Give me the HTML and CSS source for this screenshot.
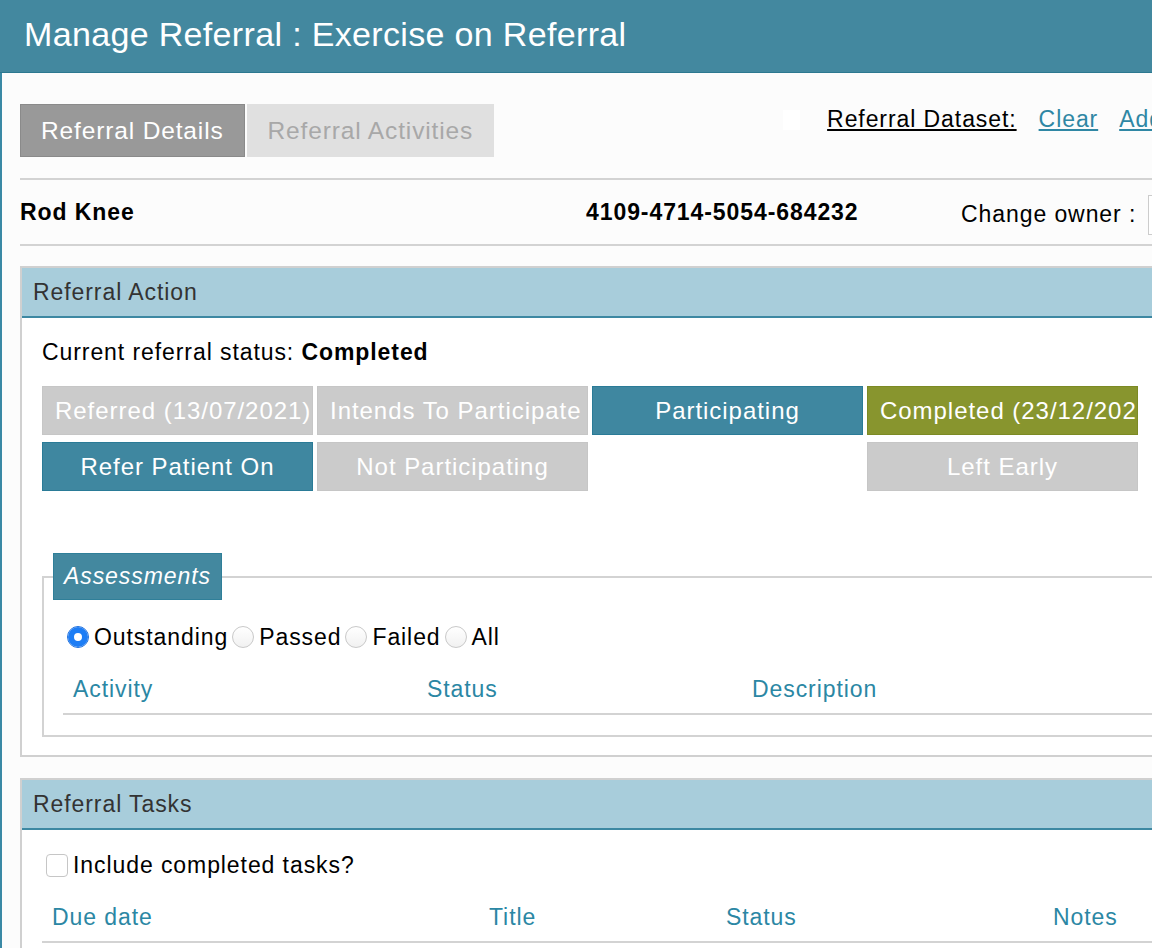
FILE: index.html
```html
<!DOCTYPE html>
<html lang="en">
<head>
    <meta charset="UTF-8">
    <title>Manage Referral : Exercise on Referral</title>
    <link rel="stylesheet" href="styles.css">
</head>
<body>
<div class="page">

    <header class="page-header">
        <h1>Manage Referral : Exercise on Referral</h1>
    </header>

    <div class="content">

        <!-- Tabs & dataset tools -->
        <div class="top-bar">
            <div class="tabs">
                <div class="tab tab-active">Referral Details</div>
                <div class="tab tab-inactive">Referral Activities</div>
            </div>
            <div class="dataset-tools">
                <span class="blank-box"></span>
                <span class="dataset-label">Referral Dataset:</span>
                <a href="#">Clear</a>
                <a href="#">Add</a>
            </div>
        </div>

        <hr class="rule">

        <div class="patient-row">
            <span class="patient-name">Rod Knee</span>
            <span class="patient-id">4109-4714-5054-684232</span>
            <span class="owner">Change owner : <span class="owner-box"></span></span>
        </div>

        <hr class="rule rule-tight">

        <!-- Referral Action -->
        <section class="panel">
            <div class="panel-title">Referral Action</div>
            <div class="panel-body">
                <div class="status-line">Current referral status: <b>Completed</b></div>

                <div class="status-grid">
                    <div class="status-btn btn-grey">Referred (13/07/2021)</div>
                    <div class="status-btn btn-grey">Intends To Participate</div>
                    <div class="status-btn btn-teal">Participating</div>
                    <div class="status-btn btn-olive">Completed (23/12/2021)</div>
                    <div class="status-btn btn-teal">Refer Patient On</div>
                    <div class="status-btn btn-grey">Not Participating</div>
                    <div></div>
                    <div class="status-btn btn-grey">Left Early</div>
                </div>

                <fieldset class="assessments">
                    <legend>Assessments</legend>
                    <div class="radio-row">
                        <label><input type="radio" name="filter" checked>Outstanding</label>
                        <label><input type="radio" name="filter">Passed</label>
                        <label><input type="radio" name="filter">Failed</label>
                        <label><input type="radio" name="filter">All</label>
                    </div>
                    <table class="grid-table assess-table">
                        <thead>
                            <tr>
                                <th class="col-activity">Activity</th>
                                <th class="col-status">Status</th>
                                <th>Description</th>
                            </tr>
                        </thead>
                    </table>
                </fieldset>
            </div>
        </section>

        <!-- Referral Tasks -->
        <section class="panel panel-tasks">
            <div class="panel-title">Referral Tasks</div>
            <div class="panel-body">
                <label class="check-row"><input type="checkbox">Include completed tasks?</label>
                <table class="grid-table tasks-table">
                    <thead>
                        <tr>
                            <th class="col-due">Due date</th>
                            <th class="col-title">Title</th>
                            <th class="col-tstatus">Status</th>
                            <th>Notes</th>
                        </tr>
                    </thead>
                </table>
            </div>
        </section>

    </div>
</div>
</body>
</html>
```

FILE: styles.css
```css
* {
    box-sizing: border-box;
}

html, body {
    margin: 0;
    padding: 0;
    overflow: hidden;
}

body {
    font-family: "Liberation Sans", Arial, sans-serif;
    font-size: 23px;
    letter-spacing: 0.04em;
    color: #000;
    background: #fcfcfc;
}

.page {
    width: 1400px;
}

.page-header {
    background: #43889f;
    height: 73px;
    border-bottom: 1px solid #2c7890;
    padding-left: 24px;
}

.page-header h1 {
    margin: 0;
    font-size: 34px;
    font-weight: normal;
    letter-spacing: 0.01em;
    line-height: 68px;
    color: #fff;
}

.content {
    border-left: 2px solid #3a89a5;
    padding: 31px 0 0 18px;
    min-height: 900px;
}

/* tabs */
.top-bar {
    display: flex;
    align-items: flex-start;
}

.tabs {
    display: flex;
    gap: 2px;
}

.tab {
    height: 53px;
    line-height: 51px;
    padding: 0 20px;
    font-size: 24.5px;
    letter-spacing: 0.035em;
    border: 1px solid transparent;
}

.tab-active {
    background: #999;
    border-color: #8a8a8a;
    color: #fff;
}

.tab-inactive {
    background: #e0e0e0;
    border-color: #e0e0e0;
    color: #a8a8a8;
}

.dataset-tools {
    display: flex;
    align-items: center;
    margin-left: 289px;
    padding-top: 2px;
    white-space: nowrap;
}

.blank-box {
    width: 17px;
    height: 20px;
    background: #fff;
    margin-right: 27px;
}

.dataset-label {
    text-decoration: underline;
    margin-right: 22px;
}

.dataset-tools a {
    color: #2f87a4;
    margin-right: 21px;
}

.rule {
    border: 0;
    border-top: 2px solid #d3d3d3;
    margin: 21px 0 0;
}

.rule-tight {
    margin-top: 0;
}

.patient-row {
    display: grid;
    grid-template-columns: 566px 375px 1fr;
    align-items: center;
    height: 64px;
}

.patient-name, .patient-id {
    font-weight: bold;
}

.owner {
    display: flex;
    align-items: center;
    white-space: nowrap;
    padding-top: 5px;
}

.owner-box {
    display: inline-block;
    width: 200px;
    height: 40px;
    margin-left: 12px;
    border: 1px solid #ccc;
    background: #fff;
}

/* panels */
.panel {
    border: 2px solid #d0d0d0;
    margin-top: 20px;
    background: #fff;
}

.panel-tasks {
    margin-top: 21px;
}

.panel-title {
    background: #a8cddb;
    border-bottom: 2px solid #3d88a2;
    height: 50px;
    line-height: 48px;
    padding-left: 11px;
    color: #333;
}

.panel-body {
    padding: 19px 20px 18px 20px;
}

.status-line {
    line-height: 30px;
}

.status-grid {
    display: grid;
    grid-template-columns: repeat(4, 271px);
    column-gap: 4px;
    row-gap: 7px;
    margin-top: 19px;
}

.status-btn {
    height: 49px;
    line-height: 47px;
    padding: 0 12px;
    border: 1px solid transparent;
    color: #fff;
    font-size: 24px;
    letter-spacing: 0.04em;
    text-align: center;
    white-space: nowrap;
    overflow: hidden;
}

.btn-grey {
    background: #cbcbcb;
    border-color: #c6c6c6;
}

.btn-teal {
    background: #3f87a0;
    border-color: #2a7b97;
}

.btn-olive {
    background: #88952e;
    border-color: #7c8a24;
}

/* assessments */
.assessments {
    margin: 62px 0 0;
    padding: 0 0 20px 9px;
    border: 2px solid #d3d3d3;
}

.assessments legend {
    height: 47px;
    line-height: 45px;
    padding: 0 10px;
    border: 1px solid #2f7f99;
    background: #43889f;
    color: #fff;
    font-style: italic;
}

.radio-row {
    display: flex;
    align-items: center;
    height: 30px;
    margin: 22px 0 0 10px;
}

.radio-row label {
    display: flex;
    align-items: center;
}

input[type="radio"] {
    appearance: none;
    width: 22px;
    height: 22px;
    margin: 0 5px 0 4px;
    border: 1px solid #c9c9c9;
    border-radius: 50%;
    background: linear-gradient(#fff, #f1f1f1);
}

input[type="radio"]:checked {
    border-color: #1b6fe0;
    background: #fff;
    box-shadow: inset 0 0 0 6px #1d7df5;
}

.grid-table {
    border-collapse: collapse;
    width: calc(100% - 10px);
    margin-top: 13px;
}

.assess-table {
    margin-left: 10px;
}

.grid-table th {
    height: 49px;
    padding: 0 10px;
    text-align: left;
    font-weight: normal;
    color: #2b87a4;
    border-bottom: 2px solid #d3d3d3;
}

.col-activity { width: 354px; }
.col-status { width: 325px; }

.tasks-table {
    width: 100%;
}

.col-due { width: 437px; }
.col-title { width: 237px; }
.col-tstatus { width: 327px; }

.check-row {
    display: flex;
    align-items: center;
    height: 30px;
    margin-top: 1px;
}

input[type="checkbox"] {
    appearance: none;
    width: 22px;
    height: 23px;
    margin: 0 5px 0 4px;
    border: 1px solid #c6c6c6;
    border-radius: 4px;
    background: #fff;
}
```
